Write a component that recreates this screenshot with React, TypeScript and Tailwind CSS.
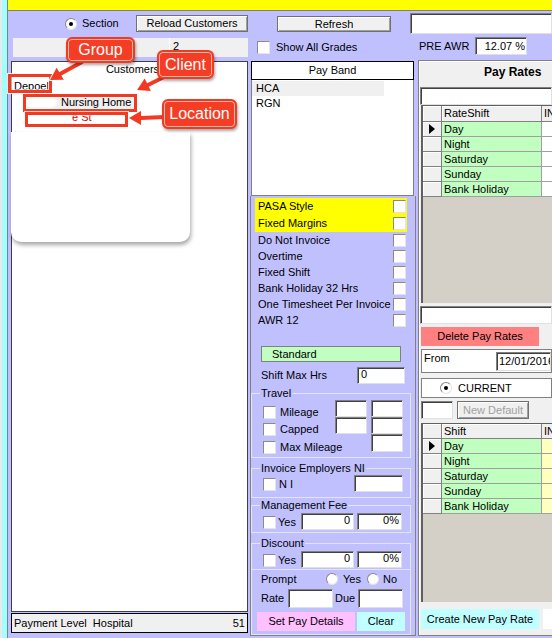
import React from "react";

const Cb = ({ className = "" }: { className?: string }) => (
  <span
    className={`inline-block h-[13px] w-[13px] shrink-0 border border-[#8a8a8a] border-r-[#e4e4e4] border-b-[#e4e4e4] bg-white ${className}`}
  />
);

const Radio = ({ on = false }: { on?: boolean }) => (
  <span className="inline-flex h-[12px] w-[12px] shrink-0 items-center justify-center rounded-full border border-[#8a8a8a] border-r-[#e4e4e4] border-b-[#e4e4e4] bg-white">
    {on && <span className="h-[4px] w-[4px] rounded-full bg-black" />}
  </span>
);

const Field = ({
  className = "",
  children,
}: {
  className?: string;
  children?: React.ReactNode;
}) => (
  <div
    className={`border border-[#808080] border-r-[#e0e0e0] border-b-[#e0e0e0] bg-white shadow-[inset_1px_1px_0_#404040] ${className}`}
  >
    {children}
  </div>
);

const Btn = ({
  className = "",
  children,
}: {
  className?: string;
  children?: React.ReactNode;
}) => (
  <div
    className={`flex items-center justify-center border border-[#707070] bg-[#f0f0f0] shadow-[inset_1px_1px_0_#fff,inset_-1px_-1px_0_#a0a0a0] ${className}`}
  >
    {children}
  </div>
);

const shifts = ["Day", "Night", "Saturday", "Sunday", "Bank Holiday"];

function Grid({
  title,
  third,
  headH,
  className,
}: {
  title: string;
  third: string;
  headH: string;
  className: string;
}) {
  return (
    <div className={`ml-[2px] border-l-2 border-t border-[#606060] bg-[#d4d0c8] ${className}`}>
      <div className={`flex ${headH}`}>
        <div className="w-[19px] border-r border-b border-[#808080] bg-[#f0f0f0] shadow-[inset_1px_1px_0_#fff]" />
        <div className="flex w-[100px] items-center border-r border-b border-[#808080] bg-[#f0f0f0] pl-[2px] shadow-[inset_1px_1px_0_#fff]">
          {title}
        </div>
        <div className="flex flex-1 items-center overflow-hidden border-b border-[#808080] bg-[#f0f0f0] pl-[2px]">
          IN
        </div>
      </div>
      {shifts.map((s, i) => (
        <div key={s} className="flex h-[15px]">
          <div className="flex w-[19px] items-center justify-center border-r border-b border-[#808080] bg-[#f0f0f0] shadow-[inset_1px_1px_0_#fff]">
            {i === 0 && (
              <svg width="6" height="10" viewBox="0 0 6 10">
                <polygon points="0,0 6,5 0,10" fill="#000" />
              </svg>
            )}
          </div>
          <div className="flex w-[100px] items-center border-r border-b border-[#a0a0a0] bg-[#c0ffc0] pl-[2px]">
            {s}
          </div>
          <div className={`flex-1 border-b border-[#a0a0a0] ${third}`} />
        </div>
      ))}
    </div>
  );
}

function Left() {
  return (
    <div className="flex w-[242px] shrink-0 flex-col">
      <div className="mt-[4px] flex h-[17px] items-center pl-[57px]">
        <Radio on />
        <span className="ml-[5px]">Section</span>
        <Btn className="mr-[2px] ml-auto h-[17px] w-[112px]">Reload Customers</Btn>
      </div>
      <div className="mt-[6px] mr-[2px] ml-[5px] flex h-[19px] bg-[#f0f0f0]">
        <div className="w-[157px] border-r border-white" />
        <div className="pt-[2px] pl-[3px]">2</div>
      </div>
      <div className="mt-[4px] mr-[2px] ml-[3px] flex h-[551px] flex-col border border-[#404040] bg-white">
        <div className="flex h-[15px] items-center justify-center pl-[6px]">Customers</div>
        <div className="mt-[1px] flex h-[16px] items-center pl-[2px]">Depoel</div>
        <div className="ml-[13px] flex h-[16px] w-[110px] items-center bg-[#f0f0f0]">
          <span className="ml-[2px] h-[12px] w-[30px] rounded-full bg-white blur-[1.5px]" />
          <span className="ml-[4px]">Nursing Home</span>
        </div>
        <div className="flex h-[15px] items-center">
          <span className="ml-[26px] h-[11px] w-[32px] rounded-full bg-white blur-[1.5px]" />
          <span className="ml-[2px] text-[#e00000]">e St</span>
        </div>
        <div className="h-[10px] pl-[2px] leading-[8px]">.</div>
      </div>
      <div className="mt-[1px] mr-[2px] ml-[3px] flex h-[20px] items-center justify-between border border-black bg-[#f0f0f0] px-[2px] whitespace-pre">
        <span>Payment Level  Hospital</span>
        <span>51</span>
      </div>
    </div>
  );
}

const flags = [
  "Do Not Invoice",
  "Overtime",
  "Fixed Shift",
  "Bank Holiday 32 Hrs",
  "One Timesheet Per Invoice",
  "AWR 12",
];

function FeeBox({ legend, mt, h }: { legend: string; mt: string; h: string }) {
  return (
    <fieldset className={`w-[160px] border border-[#e4e4f4] ${mt} ${h}`}>
      <legend className="ml-[8px] px-[1px]">{legend}</legend>
      <div className="flex h-[17px] items-start">
        <div className="mt-[4px] ml-[11px] flex w-[38px] items-center gap-[2px]">
          <Cb />
          <span>Yes</span>
        </div>
        <Field className="mt-[1px] h-[17px] w-[53px] pr-[3px] text-right">0</Field>
        <Field className="mt-[1px] ml-[3px] h-[17px] w-[45px] pr-[2px] text-right">0%</Field>
      </div>
    </fieldset>
  );
}

function Middle() {
  return (
    <div className="flex w-[166px] shrink-0 flex-col">
      <Btn className="mt-[5px] ml-[27px] h-[16px] w-[114px]">Refresh</Btn>
      <div className="mt-[9px] ml-[7px] flex h-[13px] items-center gap-[6px]">
        <Cb />
        <span>Show All Grades</span>
      </div>
      <div className="mt-[7px] ml-[1px] flex h-[135px] w-[163px] flex-col">
        <div className="flex h-[19px] items-center justify-center border border-black bg-white">Pay Band</div>
        <div className="flex-1 border-x border-b border-[#808080] bg-white pt-px">
          <div className="flex h-[15px] w-[132px] items-center bg-[#f0f0f0] pl-[4px]">HCA</div>
          <div className="flex h-[14px] items-center pl-[4px]">RGN</div>
        </div>
      </div>
      <div className="mb-[2px] flex flex-1 flex-col border-x border-b border-[#808080]">
        <div className="mt-[2px] ml-[4px] w-[152px]">
          <div className="flex h-[17px] items-center justify-between bg-[#ffff00] pr-[1px] pl-[3px]">
            <span>PASA Style</span>
            <Cb />
          </div>
          <div className="flex h-[17px] items-center justify-between bg-[#ffff00] pr-[1px] pl-[3px]">
            <span>Fixed Margins</span>
            <Cb />
          </div>
          {flags.map((f) => (
            <div key={f} className="flex h-[16px] items-center justify-between pr-[1px] pl-[3px]">
              <span>{f}</span>
              <Cb />
            </div>
          ))}
        </div>
        <div className="mt-[18px] ml-[10px] flex h-[16px] w-[140px] items-center border border-[#808080] bg-[#c0ffc0] pl-[10px]">
          Standard
        </div>
        <div className="mt-[5px] flex h-[17px] items-center">
          <span className="ml-[10px]">Shift Max Hrs</span>
          <Field className="mr-[10px] ml-auto h-[17px] w-[48px] pl-[3px]">0</Field>
        </div>
        <fieldset className="mt-[3px] h-[71px] w-[160px] border border-[#e4e4f4]">
          <legend className="ml-[8px] px-[1px]">Travel</legend>
          <div className="flex">
            <div className="mt-[4px] ml-[11px] flex w-[72px] flex-col">
              {["Mileage", "Capped", "Max Mileage"].map((t, i) => (
                <div key={t} className={`flex items-center gap-[4px] ${i === 2 ? "h-[18px]" : "h-[17px]"}`}>
                  <Cb />
                  <span className="whitespace-nowrap">{t}</span>
                </div>
              ))}
            </div>
            <div className="flex w-[32px] flex-col">
              <Field className="h-[17px]" />
              <Field className="h-[17px]" />
            </div>
            <div className="ml-[4px] flex w-[32px] flex-col">
              <Field className="h-[17px]" />
              <Field className="h-[17px]" />
              <Field className="h-[18px]" />
            </div>
          </div>
        </fieldset>
        <fieldset className="mt-[4px] h-[36px] w-[160px] border border-[#e4e4f4]">
          <legend className="ml-[8px] px-[1px]">Invoice Employers NI</legend>
          <div className="flex items-start">
            <div className="mt-[3px] ml-[11px] flex items-center gap-[3px]">
              <Cb />
              <span>N I</span>
            </div>
            <Field className="mr-[7px] ml-auto h-[17px] w-[49px]" />
          </div>
        </fieldset>
        <FeeBox legend="Management Fee" mt="mt-[1px]" h="h-[34px]" />
        <FeeBox legend="Discount" mt="mt-[4px]" h="h-[33px]" />
        <div className="flex w-[160px] flex-1 flex-col border-x border-b border-[#e4e4f4]">
          <div className="mt-[2px] flex h-[14px] items-center">
            <span className="ml-[9px] w-[65px]">Prompt</span>
            <Radio />
            <span className="ml-[5px] w-[24px]">Yes</span>
            <Radio />
            <span className="ml-[4px]">No</span>
          </div>
          <div className="mt-[3px] flex h-[19px] items-center">
            <span className="ml-[9px] w-[27px]">Rate</span>
            <Field className="h-[19px] w-[45px]" />
            <span className="ml-[2px] w-[22px]">Due</span>
            <Field className="ml-[1px] h-[19px] w-[45px]" />
          </div>
          <div className="mt-[4px] flex h-[19px]">
            <div className="ml-[5px] flex w-[98px] items-center justify-center bg-[#ffc0ff]">Set Pay Details</div>
            <div className="ml-[2px] flex w-[48px] items-center justify-center bg-[#c0ffff]">Clear</div>
          </div>
        </div>
      </div>
    </div>
  );
}

function Right() {
  return (
    <div className="flex min-w-0 flex-1 flex-col">
      <Field className="mt-[2px] -ml-[6px] h-[21px] w-[142px]" />
      <div className="mt-[3px] flex h-[18px] items-center">
        <span className="ml-[3px] w-[56px]">PRE AWR</span>
        <Field className="flex h-[18px] w-[52px] items-center justify-end pr-[1px]">12.07 %</Field>
      </div>
      <div className="mt-[5px] mb-[2px] ml-[2px] flex flex-1 flex-col border-t border-b border-l border-[#808080] bg-[#f0f0f0] shadow-[inset_1px_1px_0_#fff]">
        <div className="h-[26px] pt-[5px] pl-[65px] text-[12px] font-bold whitespace-nowrap">Pay Rates</div>
        <Field className="ml-[1px] h-[18px]" />
        <Grid title="RateShift" third="bg-white" headH="h-[16px]" className="h-[198px]" />
        <Field className="mt-[3px] ml-[1px] h-[18px]" />
        <div className="mt-[3px] ml-[2px] flex h-[19px] w-[118px] items-center justify-center bg-[#ff8080]">
          Delete Pay Rates
        </div>
        <div className="mt-[3px] ml-[2px] flex h-[24px] items-start border border-[#808080] bg-white">
          <span className="w-[74px] pt-[2px] pl-[2px]">From</span>
          <Field className="mt-[2px] flex h-[19px] flex-1 items-center overflow-hidden pl-[2px] whitespace-nowrap">
            12/01/2016
          </Field>
        </div>
        <div className="mt-[5px] ml-[2px] flex h-[20px] items-center gap-[6px] border border-[#808080] bg-white pl-[18px]">
          <Radio on />
          <span>CURRENT</span>
        </div>
        <div className="mt-[3px] ml-[2px] flex h-[18px]">
          <Field className="h-[18px] w-[32px]" />
          <Btn className="ml-[4px] h-[18px] w-[72px] text-[#a0a0a0]">New Default</Btn>
        </div>
        <Grid title="Shift" third="bg-[#ffffc0]" headH="h-[15px]" className="mt-[4px] h-[179px]" />
        <div className="mt-[7px] ml-[2px] flex h-[20px]">
          <div className="flex w-[118px] items-center justify-center bg-[#c0ffff] whitespace-nowrap">
            Create New Pay Rate
          </div>
          <div className="ml-[4px] flex-1 bg-white" />
        </div>
      </div>
    </div>
  );
}

const Callout = ({ className, children }: { className: string; children: React.ReactNode }) => (
  <div
    className={`absolute flex items-center justify-center rounded-[6px] border-2 border-[#f23a22] bg-[#f53c24] text-[16px] leading-[18px] text-white shadow-[inset_0_0_0_1px_#ffb8a8,1px_2px_3px_rgba(0,0,0,0.35)] ${className}`}
  >
    {children}
  </div>
);

const Outline = ({ className }: { className: string }) => (
  <div
    className={`absolute border-[3px] border-[#f23a22] shadow-[0_0_0_1px_rgba(255,255,255,0.8),inset_0_0_0_1px_rgba(255,255,255,0.6)] ${className}`}
  />
);

export default function App() {
  return (
    <div className="relative flex h-[638px] w-[552px] overflow-hidden bg-[#c0c0ff] font-['Liberation_Sans',Arial,sans-serif] text-[11px] leading-[13px] text-black">
      <div className="w-[8px] shrink-0 border-r border-[#808080] border-l-2 border-l-[#e8e8e8] bg-[#a0ffff]" />
      <div className="flex min-w-0 flex-1 flex-col">
        <div className="h-[11px] shrink-0 border-b border-[#808080] bg-[#ffff00]" />
        <div className="flex flex-1">
          <Left />
          <Middle />
          <Right />
        </div>
      </div>

      {/* pasted white card */}
      <div className="absolute top-[132px] left-[11px] h-[110px] w-[179px] rounded-b-[10px] bg-white shadow-[1px_3px_4px_rgba(0,0,0,0.35)]" />

      {/* annotations */}
      <Outline className="top-[74px] left-[8px] h-[19px] w-[44px]" />
      <Outline className="top-[94px] left-[23px] h-[18px] w-[114px]" />
      <Outline className="top-[112px] left-[25px] h-[15px] w-[103px]" />
      <svg className="pointer-events-none absolute top-0 left-0" width="250" height="140">
        <g stroke="#fff" strokeWidth="6" strokeLinecap="round" fill="#fff" strokeLinejoin="round">
          <line x1="82" y1="62" x2="60" y2="74" />
          <polygon points="50,80 63.8,79.8 56.6,67.8" strokeWidth="2" />
          <line x1="168" y1="75" x2="148" y2="85" />
          <polygon points="137,90 150.9,91.1 144.7,78.5" strokeWidth="2" />
          <line x1="165" y1="117" x2="141" y2="118" />
          <polygon points="129,118 141,111 141,125" strokeWidth="2" />
        </g>
        <g stroke="#f23a22" strokeWidth="4" strokeLinecap="round" fill="#f23a22">
          <line x1="82" y1="62" x2="60" y2="74" />
          <polygon points="50,80 63.8,79.8 56.6,67.8" strokeWidth="0" />
          <line x1="168" y1="75" x2="148" y2="85" />
          <polygon points="137,90 150.9,91.1 144.7,78.5" strokeWidth="0" />
          <line x1="165" y1="117" x2="141" y2="118" />
          <polygon points="129,118 141,111 141,125" strokeWidth="0" />
        </g>
      </svg>
      <Callout className="top-[37px] left-[66px] h-[26px] w-[69px]">Group</Callout>
      <Callout className="top-[50px] left-[157px] h-[29px] w-[57px]">Client</Callout>
      <Callout className="top-[99px] left-[162px] h-[30px] w-[75px]">Location</Callout>
    </div>
  );
}
